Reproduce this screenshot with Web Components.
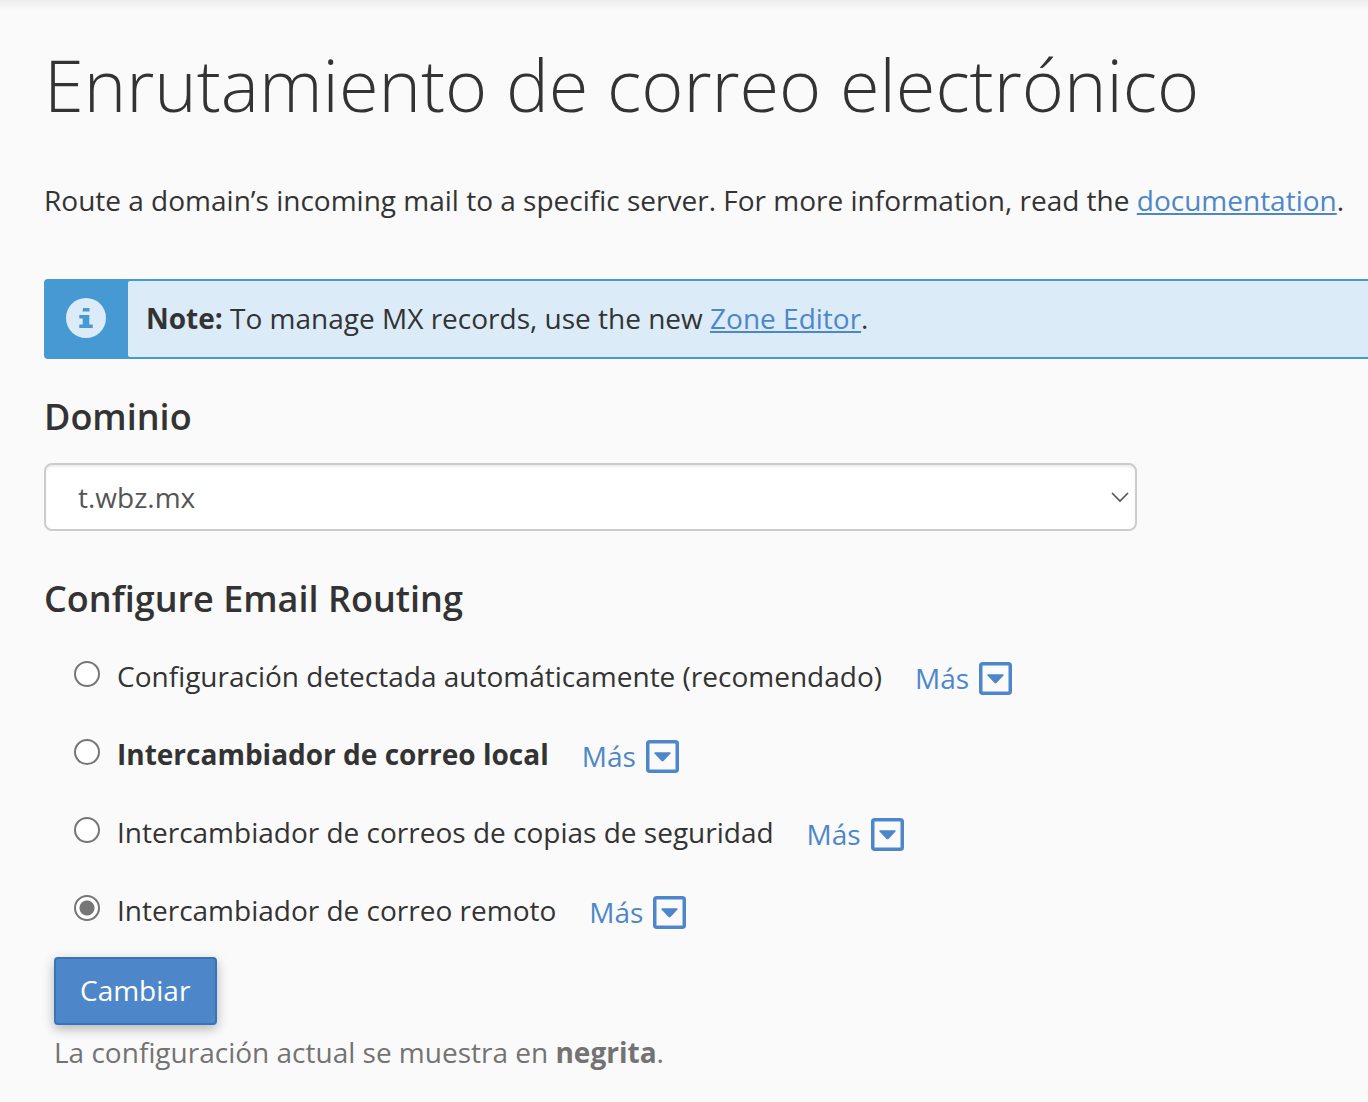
<!DOCTYPE html>
<html lang="es">
<head>
<meta charset="utf-8">
<title>Enrutamiento de correo electrónico</title>
<style>
body{margin:0;background:#fafafa;color:#333;font:28px/40px "Open Sans",sans-serif;overflow-x:hidden}
</style>
</head>
<body>
<mail-routing-page></mail-routing-page>
<script>
const define=(name,html)=>customElements.define(name,class extends HTMLElement{
  constructor(){super();this.attachShadow({mode:'open'}).innerHTML=html;}
});
define('info-note',`<style>
:host{display:flex;box-sizing:border-box;border:2px solid #4799d4;border-right:0;border-radius:4px 0 0 4px;background:#4799d4}
.mark{box-sizing:border-box;width:82px;padding:0 2px 2px 0;display:flex;align-items:center;justify-content:center}
.text{padding:17px 18px 19px;flex:1;white-space:nowrap;background:#dbebf8;border-radius:2px 0 0 2px}
</style><div class="mark"><svg width="40" height="40" viewBox="0 0 40 40" aria-hidden="true"><circle cx="20" cy="20" r="20" fill="#dbebf8"/><path fill="#4799d4" d="M17 10h6.500v3.500H16.500zM13.300 17h10v9.500h3.400V30H13.300v-3.500h3.400v-6h-3.400z"/></svg></div><div class="text"><slot></slot></div>`);
define('more-link',`<style>
:host{display:inline-flex}
a{display:flex;align-items:center;gap:10px;color:#4e87c9;text-decoration:none}
svg{display:block}
</style><a href="#"><span>Más</span><svg width="33" height="33" viewBox="0 0 33 33" aria-hidden="true"><rect x="1.750" y="1.750" width="29.500" height="29.500" rx="2" fill="none" stroke="currentColor" stroke-width="3.500"/><path fill="currentColor" d="M9 12.300h15q1.200.2.500 1.200l-7 7.400q-1 .9-2 0l-7-7.400q-.7-1 .5-1.200z"/></svg></a>`);
define('routing-options',`<style>
:host{display:block}
fieldset{border:0;margin:0;padding:0 0 0 30px;display:flex;flex-direction:column;gap:40px}
.row{display:flex;align-items:center;height:38px}
label{display:flex;align-items:center}
input{appearance:none;box-sizing:border-box;width:26px;height:26px;margin:0 17px 4px 0;border:2px solid #767676;border-radius:50%;background:#fff}
input:checked{background:radial-gradient(circle,#767676 0 7px,#fff 8px)}
more-link{margin:4px 0 0 33px}
.current{font-weight:700}
</style><fieldset aria-label="Configure Email Routing">
<div class="row"><label><input type="radio" name="r"><span>Configuración detectada automáticamente (recomendado)</span></label><more-link></more-link></div>
<div class="row"><label><input type="radio" name="r"><span class="current">Intercambiador de correo local</span></label><more-link></more-link></div>
<div class="row"><label><input type="radio" name="r"><span>Intercambiador de correos de copias de seguridad</span></label><more-link></more-link></div>
<div class="row"><label><input type="radio" name="r" checked><span>Intercambiador de correo remoto</span></label><more-link></more-link></div>
</fieldset>`);
define('domain-picker',`<style>
:host{display:block}
label{display:block;font-size:36px;line-height:48px;font-weight:600}
.box{display:grid;max-width:1093px;margin:22px 44px 0 0;align-items:center}
select,svg{grid-area:1/1}
select{appearance:none;box-sizing:border-box;width:100%;height:68px;border:2px solid #ccc;border-radius:8px;background:#fff;box-shadow:inset 0 2px 2px #00000013;padding:0 32px;font:inherit;color:#555}
svg{justify-self:end;margin-right:8px;pointer-events:none}
</style><label for="d">Dominio</label><div class="box"><select id="d"><option>t.wbz.mx</option></select><svg width="18" height="12" viewBox="0 0 18 12" aria-hidden="true"><path d="M1 2l8 8 8-8" fill="none" stroke="#555" stroke-width="1.700"/></svg></div>`);
define('mail-routing-page',`<style>
:host{display:block;padding:42px 0 28px 44px;background:linear-gradient(#ededed,#fafafa 10px)}
h1{margin:0;font-size:72px;line-height:84px;font-weight:300;white-space:nowrap}
p{margin:0}
a{color:#4e87c9;text-decoration-thickness:2px;text-underline-offset:2px}
.intro{margin-top:54px;white-space:nowrap}
info-note{margin-top:59px}
domain-picker{margin-top:34px}
h2{margin:44px 0 34px;font-size:36px;line-height:48px;font-weight:600}
footer{padding-left:10px;margin-top:28px}
button{display:block;box-sizing:border-box;height:68px;padding:0 25px 2px 24px;border:2px solid #3b73b8;border-radius:4px;background:#4e87c9;color:#fff;font:inherit;box-shadow:0 4px 12px #00000048}
.hint{color:#737373;margin-top:7px}
</style>
<h1>Enrutamiento de correo electrónico</h1>
<p class="intro">Route a domain’s incoming mail to a specific server. For more information, read the <a href="#">documentation</a>.</p>
<info-note><b>Note:</b> To manage MX records, use the new <a href="#">Zone Editor</a>.</info-note>
<domain-picker></domain-picker>
<h2>Configure Email Routing</h2>
<routing-options></routing-options>
<footer><button type="button">Cambiar</button><p class="hint">La configuración actual se muestra en <b>negrita</b>.</p></footer>`);
</script>
</body>
</html>
